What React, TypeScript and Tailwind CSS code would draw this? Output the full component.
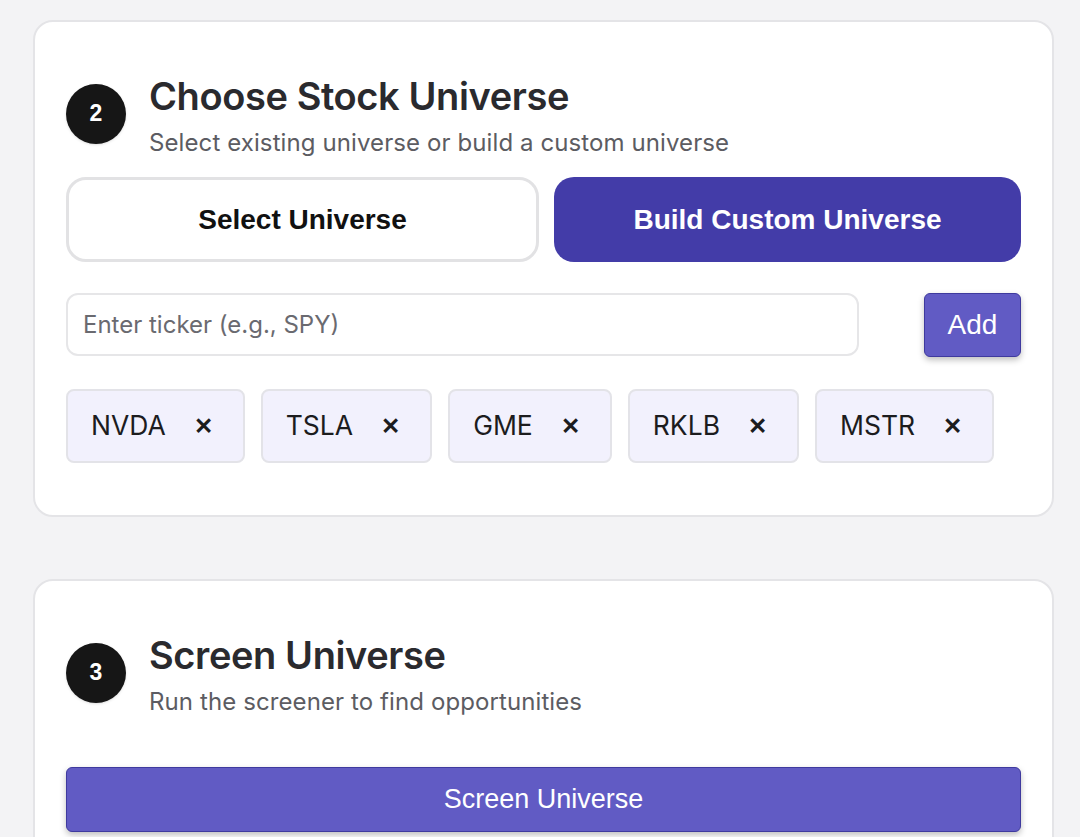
import React from "react";

const inter = { fontFamily: "Inter, 'Noto Sans', sans-serif" };

function StepHeader({ n, title, sub }: { n: string; title: string; sub: string }) {
  return (
    <div className="flex items-center gap-[23px] pt-[46px]">
      <div className="w-[60px] h-[60px] rounded-full bg-[#161616] flex items-center justify-center text-white text-[23px] font-bold font-['Liberation_Sans',Arial,sans-serif] shadow-sm shrink-0">
        {n}
      </div>
      <div className="flex flex-col pt-[5px]" style={inter}>
        <h2 className="text-[38px] leading-[46px] font-semibold text-[#2a2a2e] tracking-[-0.4px]">{title}</h2>
        <p className="text-[24px] leading-[32px] text-[#5c5c62] mt-[8px] tracking-[0.1px]">{sub}</p>
      </div>
    </div>
  );
}

function Tag({ label }: { label: string }) {
  return (
    <div
      className="h-[74px] flex items-center pl-[23px] pr-[22px] bg-[#f2f1fd] border-2 border-[#e3e3e8] rounded-[8px] text-[26.5px] text-[#1c1c1e]"
      style={inter}
    >
      <span>{label}</span>
      <span className="ml-[20px] px-[8px] text-[23px] font-bold leading-none font-['Liberation_Sans',Arial,sans-serif]">✕</span>
    </div>
  );
}

export default function App() {
  const tags = ["NVDA", "TSLA", "GME", "RKLB", "MSTR"];
  return (
    <div className="h-[837px] bg-[#f3f3f5] pl-[33px] pr-[26px] pt-[20px] overflow-hidden">
      <div className="bg-white border-2 border-[#e4e4e7] rounded-[20px] px-[31px] pb-[52px]">
        <StepHeader n="2" title="Choose Stock Universe" sub="Select existing universe or build a custom universe" />
        <div className="flex gap-[15px] mt-[18px]">
          <button className="flex-1 h-[85px] bg-white border-[3px] border-[#e2e2e4] rounded-[20px] text-[28px] font-bold text-[#111] font-['Liberation_Sans',Arial,sans-serif]">
            Select Universe
          </button>
          <button className="flex-1 h-[85px] bg-[#433ca8] rounded-[20px] text-[28px] font-bold text-white font-['Liberation_Sans',Arial,sans-serif]">
            Build Custom Universe
          </button>
        </div>
        <div className="flex items-start justify-between mt-[31px]">
          <input
            placeholder="Enter ticker (e.g., SPY)"
            className="w-[793px] h-[63px] border-2 border-[#e6e6e8] rounded-[12px] px-[15px] text-[24px] text-[#333] placeholder:text-[#6a6a70] outline-none"
            style={inter}
          />
          <button className="w-[97px] h-[64px] bg-[#615bc4] border border-[#3f3a9e] rounded-[6px] text-white text-[28px] shadow-[0_3px_6px_rgba(0,0,0,0.25)] font-['Liberation_Sans',Arial,sans-serif]">
            Add
          </button>
        </div>
        <div className="flex gap-[16px] mt-[32px]">
          {tags.map((t) => (
            <Tag key={t} label={t} />
          ))}
        </div>
      </div>

      <div className="bg-white border-2 border-[#e4e4e7] rounded-[20px] px-[31px] pb-[40px] mt-[62px]">
        <StepHeader n="3" title="Screen Universe" sub="Run the screener to find opportunities" />
        <button className="w-full h-[65px] mt-[49px] bg-[#615bc4] border border-[#3f3a9e] rounded-[6px] text-white text-[27px] shadow-[0_3px_6px_rgba(0,0,0,0.25)] font-['Liberation_Sans',Arial,sans-serif]">
          Screen Universe
        </button>
      </div>
    </div>
  );
}
